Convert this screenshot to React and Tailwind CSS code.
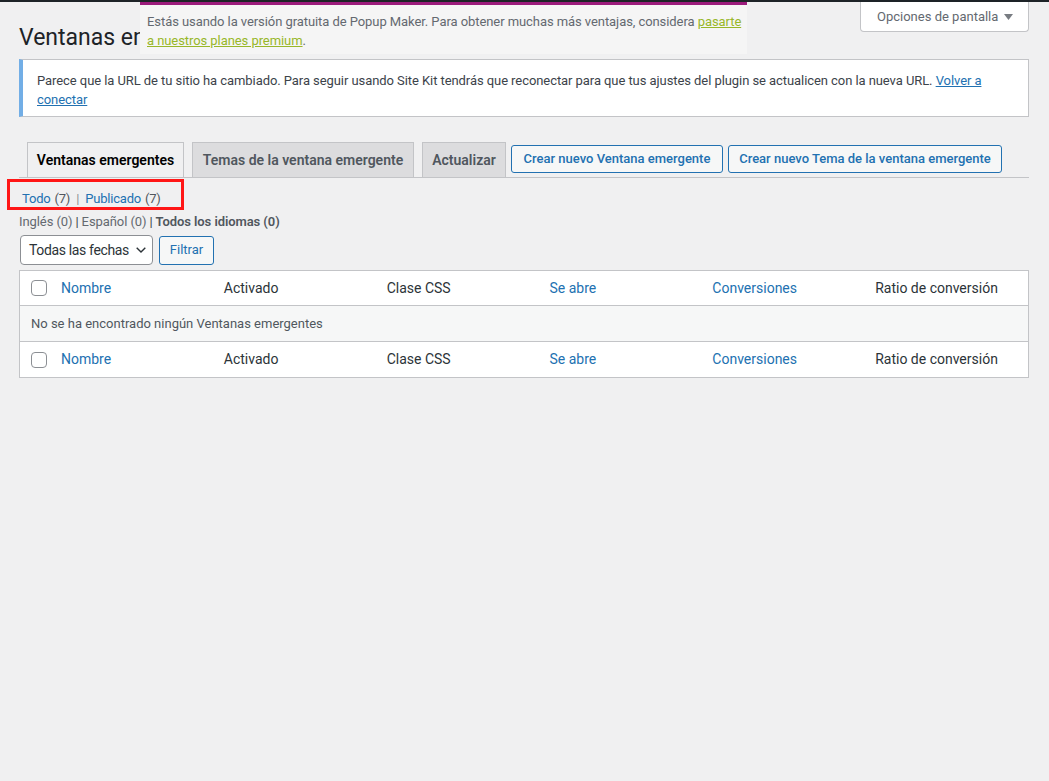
import React from "react";

const font = { fontFamily: 'Roboto, "Liberation Sans", sans-serif' };

function Checkbox() {
  return <span className="block w-[16px] h-[16px] border border-[#8c8f94] rounded-[4px] bg-white" />;
}

function HeaderRow({ border }) {
  const cell = "pl-[10px] text-[14px] whitespace-nowrap";
  return (
    <div className={`grid grid-cols-[31px_repeat(6,1fr)] items-center h-[35px] ${border}`}>
      <div className="pl-[11px]"><Checkbox /></div>
      <div className={`${cell} text-[#2271b1]`}>Nombre</div>
      <div className={`${cell} text-[#2c3338]`}>Activado</div>
      <div className={`${cell} text-[#2c3338]`}>Clase CSS</div>
      <div className={`${cell} text-[#2271b1]`}>Se abre</div>
      <div className={`${cell} text-[#2271b1]`}>Conversiones</div>
      <div className={`${cell} text-[#2c3338]`}>Ratio de conversión</div>
    </div>
  );
}

export default function App() {
  return (
    <div className="relative w-[1049px] h-[781px] bg-[#f0f0f1] overflow-hidden" style={font}>
      {/* admin bar edge */}
      <div className="absolute top-0 left-0 right-0 h-[2px] bg-[#1d2327] z-20" />

      {/* Popup Maker notice (overlaps title) */}
      <div className="absolute left-[140px] top-[2px] w-[607px] h-[52px] bg-[#f5f5f5] border-t-[3px] border-[#9b1b7b] pl-[7px] pr-[2px] pt-[7px] text-[13px] leading-[19px] tracking-[-0.07px] text-[#646970] z-10">
        Estás usando la versión gratuita de Popup Maker. Para obtener muchas más ventajas, considera{" "}
        <span className="text-[#98b729] underline">pasarte a nuestros planes premium</span>.
      </div>

      {/* Title row */}
      <div className="flex justify-between items-start pl-[19px] pr-[20px] h-[53px]">
        <h1 className="pt-[23px] text-[23px] leading-[30px] font-normal text-[#1d2327] whitespace-nowrap">
          Ventanas emergentes
        </h1>
        <div className="flex items-center justify-between w-[169px] h-[32px] bg-white border border-t-0 border-[#c3c4c7] rounded-b-[4px] pl-[16px] pr-[15px] pt-[2px] text-[13px] text-[#646970]">
          <span>Opciones de pantalla</span>
          <svg width="9" height="6" viewBox="0 0 9 6"><path d="M0 0 L9 0 L4.5 6 Z" fill="#787c82" /></svg>
        </div>
      </div>

      {/* Site Kit notice */}
      <div className="mt-[6px] ml-[19px] mr-[20px] bg-white border border-[#c3c4c7] border-l-4 border-l-[#72aee6] pl-[14px] pr-[12px] pt-[11px] pb-[7px] text-[13px] leading-[19px] tracking-[-0.07px] text-[#3c434a]">
        Parece que la URL de tu sitio ha cambiado. Para seguir usando Site Kit tendrás que reconectar para que tus ajustes del plugin se actualicen con la nueva URL.{" "}
        <span className="text-[#2271b1] underline">Volver a conectar</span>
      </div>

      {/* Tabs */}
      <div className="mt-[25px] ml-[19px] mr-[20px] flex items-end border-b border-[#c3c4c7]">
        <div className="ml-[8px] w-[157px] h-[35px] flex items-center justify-center border border-b-0 border-[#c3c4c7] bg-[#f0f0f1] text-[14px] font-semibold text-[#000] whitespace-nowrap">
          Ventanas emergentes
        </div>
        <div className="ml-[8px] w-[222px] h-[35px] flex items-center justify-center border border-b-0 border-[#c3c4c7] bg-[#dcdcde] text-[14px] font-semibold text-[#50575e] whitespace-nowrap">
          Temas de la ventana emergente
        </div>
        <div className="ml-[8px] w-[84px] h-[35px] flex items-center justify-center border border-b-0 border-[#c3c4c7] bg-[#dcdcde] text-[14px] font-semibold text-[#50575e] whitespace-nowrap">
          Actualizar
        </div>
        <div className="ml-[5px] mb-[4px] w-[212px] h-[28px] flex items-center justify-center border border-[#2271b1] rounded-[3px] bg-[#f6f7f7] text-[13px] font-medium text-[#2271b1] whitespace-nowrap">
          Crear nuevo Ventana emergente
        </div>
        <div className="ml-[5px] mb-[4px] w-[274px] h-[28px] flex items-center justify-center border border-[#2271b1] rounded-[3px] bg-[#f6f7f7] text-[13px] font-medium text-[#2271b1] whitespace-nowrap">
          Crear nuevo Tema de la ventana emergente
        </div>
      </div>

      {/* Subsubsub */}
      <div className="relative mt-[8px] ml-[22px] h-[26px] flex items-center text-[13px] tracking-[-0.2px] text-[#50575e]">
        <span className="text-[#2271b1]">Todo</span>
        <span className="ml-[4px]">(7)</span>
        <span className="mx-[6px] text-[#8c8f94]">|</span>
        <span className="text-[#2271b1]">Publicado</span>
        <span className="ml-[4px]">(7)</span>
        <div className="absolute left-[-15px] top-[-7px] w-[177px] h-[31px] border-[3px] border-[#ff1616]" />
      </div>

      {/* Languages */}
      <div className="ml-[19px] h-[19px] flex items-center text-[13px] tracking-[-0.08px] text-[#646970] whitespace-nowrap">
        <span>Inglés (0)</span>
        <span className="mx-[3px] text-[#3c434a]">|</span>
        <span>Español (0)</span>
        <span className="mx-[3px] text-[#3c434a]">|</span>
        <span className="font-semibold text-[#50575e]">Todos los idiomas (0)</span>
      </div>

      {/* Tablenav */}
      <div className="mt-[4px] ml-[20px] flex items-center gap-[6px]">
        <div className="w-[133px] h-[30px] bg-white border border-[#8c8f94] rounded-[4px] flex items-center justify-between pl-[8px] pr-[6px] text-[14px] tracking-[-0.35px] text-[#2c3338]">
          <span className="whitespace-nowrap">Todas las fechas</span>
          <svg width="10" height="6" viewBox="0 0 10 6"><path d="M0.7 0.7 L5 5 L9.3 0.7" fill="none" stroke="#2c3338" strokeWidth="1.4" /></svg>
        </div>
        <div className="w-[55px] h-[29px] flex items-center justify-center bg-[#f6f7f7] border border-[#2271b1] rounded-[3px] text-[13px] text-[#2271b1]">
          Filtrar
        </div>
      </div>

      {/* Table */}
      <div className="mt-[5px] ml-[19px] mr-[20px] bg-white border border-[#c3c4c7]">
        <HeaderRow border="border-b border-[#c3c4c7]" />
        <div className="h-[36px] bg-[#f6f7f7] border-b border-[#c3c4c7] flex items-center pl-[11px] text-[13px] text-[#50575e]">
          No se ha encontrado ningún Ventanas emergentes
        </div>
        <HeaderRow border="" />
      </div>
    </div>
  );
}
